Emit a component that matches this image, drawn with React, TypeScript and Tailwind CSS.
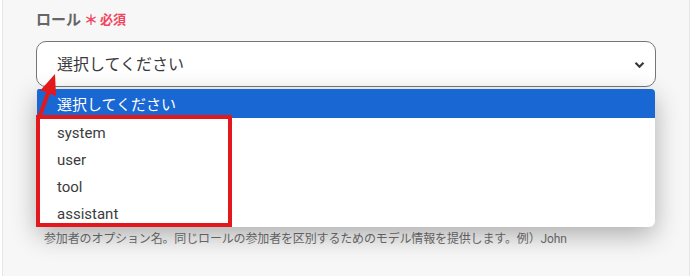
import React from 'react';

const options = ['system', 'user', 'tool', 'assistant'];

const App: React.FC = () => {
    return (
        <div className="w-[694px] h-[276px] bg-white overflow-hidden" style={{ fontFamily: 'Roboto, "Noto Sans CJK JP", sans-serif' }}>
            <div className="relative ml-[2px] w-[688px] h-[276px] bg-[#f7f7f7] border-x border-[#e6e6e6] px-[33px] pt-[9px]">
                {/* label */}
                <div className="flex items-center h-[22px] gap-[3px]">
                    <span className="text-[15px] font-bold text-[#666666]">ロール</span>
                    <span className="flex items-center text-[13px] font-bold text-[#f0455f]">
                        <span className="text-[14px] leading-none mr-[2px]">＊</span>必須
                    </span>
                </div>

                {/* select */}
                <div className="relative mt-[10px]">
                    <div className="flex items-center justify-between h-[46px] rounded-[10px] border border-[#767676] bg-white pl-[20px] pr-[10px]">
                        <span className="text-[16px] text-[#3a3a3a] pt-[1px]">選択してください</span>
                        <svg width="11" height="8" viewBox="0 0 11 8" className="mt-[1px]">
                            <path d="M1.5 1.8 L5.5 5.8 L9.5 1.8" fill="none" stroke="#3a3a3a" strokeWidth="2.2" />
                        </svg>
                    </div>

                    {/* open dropdown */}
                    <div className="absolute left-[1px] top-[48px] w-[618px] bg-white rounded-b-[6px] rounded-tr-[4px] rounded-tl-[2px] overflow-hidden shadow-[0_8px_26px_rgba(0,0,0,0.3)] pb-[1px]">
                        <div className="flex items-center h-[29px] bg-[#1967d2] pl-[20px] pt-[3px] text-[15px] text-white">選択してください</div>
                        {options.map(o => (
                            <div key={o} className="flex items-center h-[27px] pl-[20px] pt-[3px] text-[15px] text-[#3c3c3c]">{o}</div>
                        ))}
                    </div>
                </div>

                {/* helper */}
                <p className="mt-[143px] pl-[8px] text-[12px] tracking-[-0.15px] text-[#707070]">
                    参加者のオプション名。同じロールの参加者を区別するためのモデル情報を提供します。例）John
                </p>

                {/* annotation box */}
                <div className="absolute left-[33px] top-[115px] w-[196px] h-[112px] border-[4px] border-[#e2181d]" />

                {/* annotation arrow */}
                <svg className="absolute left-[-3px] top-0" width="80" height="130" viewBox="0 0 80 130">
                    <line x1="39" y1="118" x2="48.5" y2="92" stroke="#e2181d" strokeWidth="4" />
                    <polygon points="55,74 56,96 40.5,90.2" fill="#e2181d" />
                </svg>
            </div>
        </div>
    );
};

export default App;
